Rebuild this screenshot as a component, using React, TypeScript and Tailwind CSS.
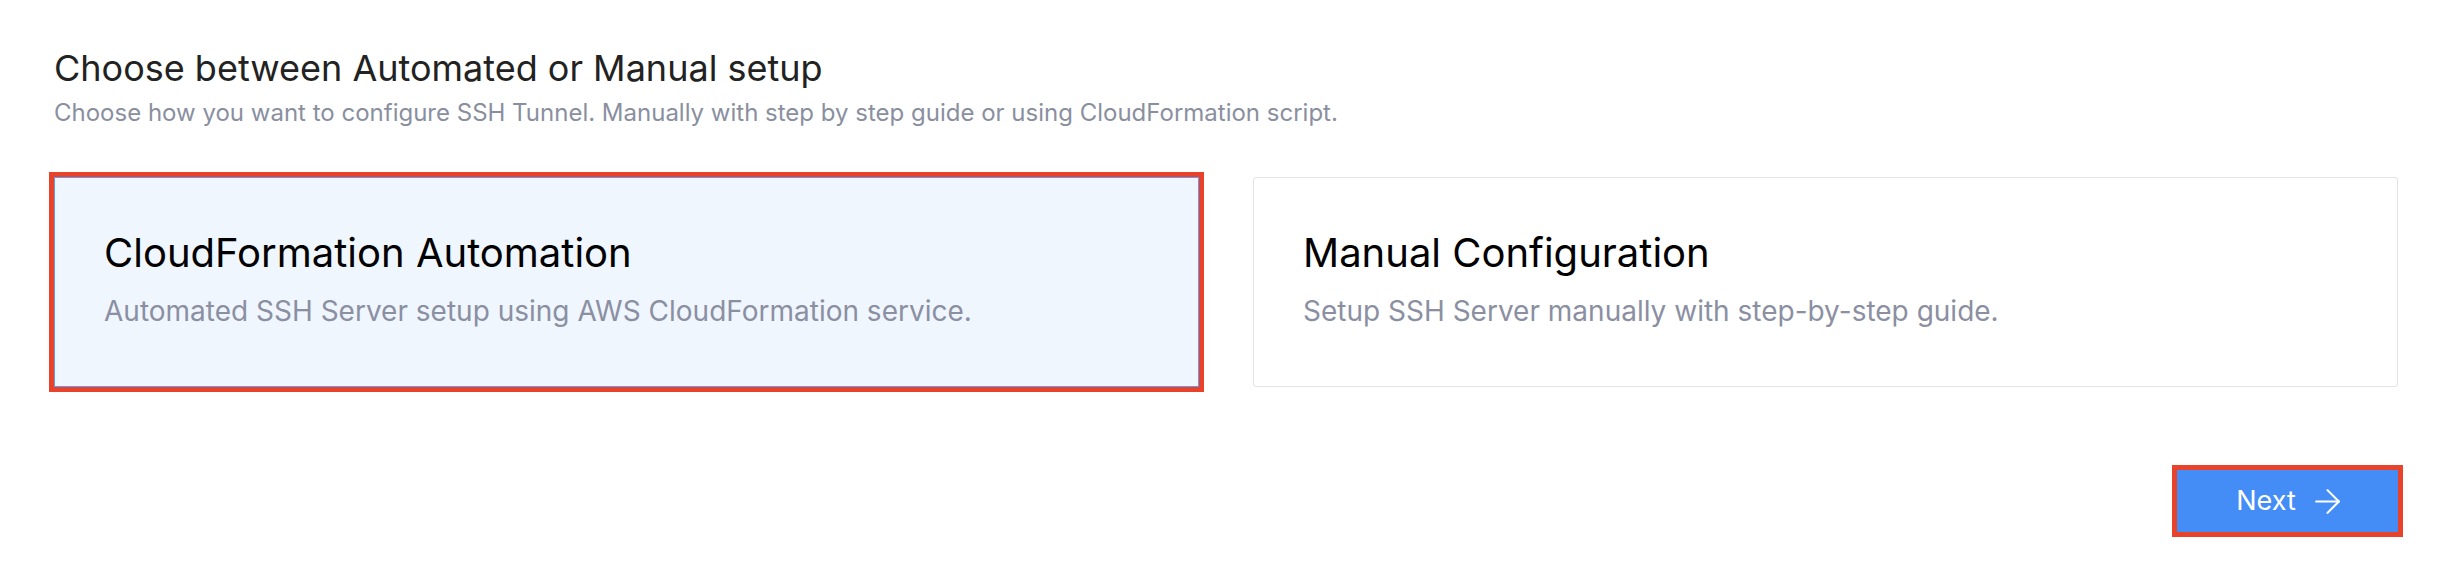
import React, { useState } from 'react';
import { ArrowRight } from 'lucide-react';

type Mode = 'automated' | 'manual';

const options: { id: Mode; title: string; description: string }[] = [
  {
    id: 'automated',
    title: 'CloudFormation Automation',
    description: 'Automated SSH Server setup using AWS CloudFormation service.',
  },
  {
    id: 'manual',
    title: 'Manual Configuration',
    description: 'Setup SSH Server manually with step-by-step guide.',
  },
];

const App = () => {
  const [mode, setMode] = useState<Mode>('automated');

  return (
    <div
      className="min-h-screen bg-white pl-[54px] pr-[40px] pt-[46px]"
      style={{ fontFamily: 'Inter, "Noto Sans", sans-serif' }}
    >
      {/* Header */}
      <h1 className="text-[36px] leading-[44px] text-[#222222]">Choose between Automated or Manual setup</h1>
      <p className="mt-[8px] text-[24px] leading-[30px] text-[#8a8fa0]">
        Choose how you want to configure SSH Tunnel. Manually with step by step guide or using CloudFormation script.
      </p>

      {/* Options */}
      <div className="mt-[49px] grid grid-cols-2 gap-[54px]">
        {options.map((option) => {
          const isSelected = mode === option.id;
          return (
            <button
              key={option.id}
              onClick={() => setMode(option.id)}
              className={`flex h-[210px] flex-col justify-start border px-[49px] pt-[51px] text-left ${
                isSelected
                  ? 'rounded-none border-[#5b9cf7] bg-[#eff6fe] outline-[5px] outline-offset-0 outline-[#e8432a]'
                  : 'rounded-[3px] border-[#e2e3e8] bg-white'
              }`}
            >
              <h2 className="text-[40px] leading-[48px] text-black">{option.title}</h2>
              <p className="mt-[16px] text-[28px] leading-[36px] text-[#8b8fa2]">{option.description}</p>
            </button>
          );
        })}
      </div>

      {/* Footer */}
      <div className="mt-[83px] flex justify-end">
        <button className="flex h-[62px] w-[221px] items-center justify-center gap-[12px] bg-[#448df7] pl-[8px] text-[27px] text-white outline-[5px] outline-[#e8432a]">
          Next
          <ArrowRight className="h-[39px] w-[39px]" strokeWidth={1.3} />
        </button>
      </div>
    </div>
  );
};

export default App;
